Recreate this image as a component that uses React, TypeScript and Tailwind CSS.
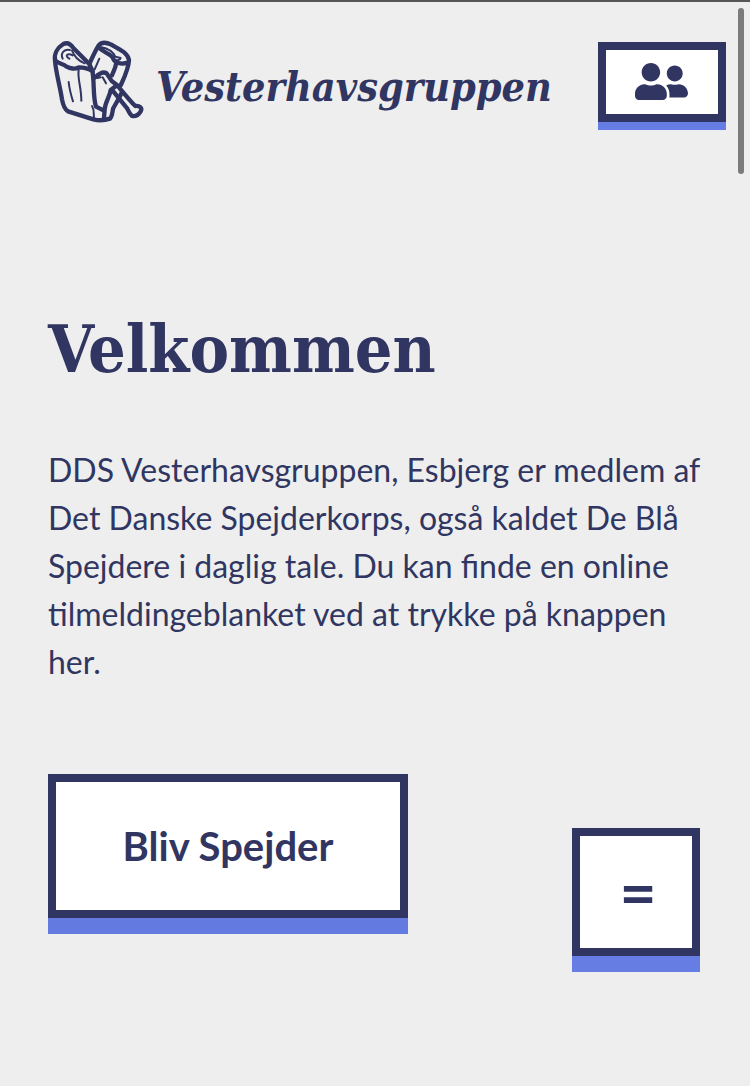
import { FaUserFriends } from "react-icons/fa";

function LogoMark() {
  return (
    <svg
      viewBox="12 18 276 249"
      className="h-[83px] w-[92px] shrink-0 overflow-visible"
      fill="none"
      stroke="#303661"
      strokeLinecap="round"
      strokeLinejoin="round"
      aria-hidden="true"
    >
      <g strokeWidth="13">
        <path d="M21 72C18 52 30 34 46 24C58 18 68 24 76 36L124 84L134 106C120 96 106 94 92 94C82 100 66 98 56 92C46 82 32 86 21 72Z" />
        <path d="M21 74C24 112 36 150 42 190C46 212 50 220 60 226L136 250C152 254 174 252 186 248C194 240 192 228 196 216C204 202 214 186 220 172" />
        <path d="M133 104C140 144 134 180 144 212L168 224" />
        <path d="M124 84C132 66 142 44 152 28C162 16 178 20 190 26C212 40 238 48 243 72C242 98 230 122 218 148" />
        <path d="M152 34C164 48 182 50 194 64C198 82 220 86 240 80" />
        <path d="M204 84C202 98 196 106 192 118" />
        <path d="M142 124C152 114 164 104 176 112L192 136L208 148C228 172 244 192 262 210C274 208 284 216 278 226C272 236 262 242 252 240C244 234 242 226 238 218L194 164" />
        <path d="M204 150L188 162C186 182 172 196 170 220L168 246" />
      </g>
      <g strokeWidth="6">
        <path d="M44 68C36 50 50 38 66 42M64 68C48 58 60 50 74 58M72 44C80 62 88 72 110 82" />
        <path d="M62 138C64 158 68 174 75 196M92 102C88 130 100 152 100 194M132 210C140 222 136 234 138 246" />
        <path d="M160 34C182 38 194 46 202 62L218 66C216 74 206 74 196 70M176 50L192 58M154 68L140 100M148 126L158 124M164 124L174 142" />
      </g>
    </svg>
  );
}

export default function App() {
  return (
    <div className="relative min-h-screen border-t-2 border-[#555555] bg-[#eeeeee] font-[Lato,sans-serif] text-[#303661]">
      <div className="absolute top-1.5 right-1.5 h-[166px] w-1.5 rounded-full bg-[#7b7b7b]" />
      <header className="flex items-start justify-between pt-10 pr-6 pl-[52px]">
        <a href="#" className="flex items-center gap-3">
          <LogoMark />
          <span className="pt-2 font-['DejaVu_Serif_Condensed','DejaVu_Serif',serif] text-[41px] leading-none font-bold italic">
            Vesterhavsgruppen
          </span>
        </a>
        <button
          type="button"
          aria-label="Medlemmer"
          className="flex h-20 w-32 shrink-0 items-center justify-center border-8 border-[#303661] bg-white pr-0.5 pb-0.5 shadow-[0_8px_0_#667de3]"
        >
          <FaUserFriends size={53} />
        </button>
      </header>
      <main className="px-12 pt-44">
        <h1 className="font-['DejaVu_Serif_Condensed','DejaVu_Serif',serif] text-[66px] leading-[96px] font-bold">
          Velkommen
        </h1>
        <p className="mt-[49px] text-[32px] leading-[48px]">
          DDS Vesterhavsgruppen, Esbjerg er medlem af Det Danske Spejderkorps, også kaldet De Blå
          Spejdere i daglig tale. Du kan finde en online tilmeldingeblanket ved at trykke på knappen
          her.
        </p>
        <a
          href="#"
          className="mt-[88px] flex h-36 w-[360px] items-center justify-center border-8 border-[#303661] bg-white text-[40px] font-bold shadow-[0_16px_0_#637be0]"
        >
          Bliv Spejder
        </a>
      </main>
      <button
        type="button"
        aria-label="Menu"
        className="fixed right-[50px] bottom-[130px] flex size-32 items-center justify-center border-8 border-[#303661] bg-white pl-1 text-[64px] leading-none font-bold shadow-[0_16px_0_#667de3]"
      >
        =
      </button>
    </div>
  );
}
